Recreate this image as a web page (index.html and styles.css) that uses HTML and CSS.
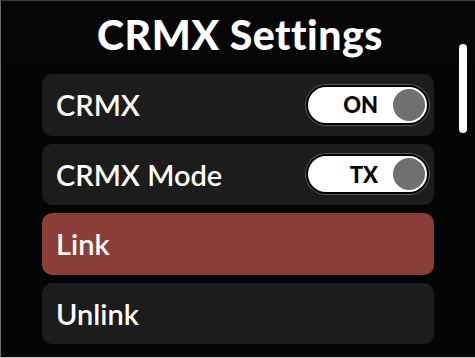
FILE: index.html
```html
<!DOCTYPE html>
<html>

<head>
    <title>CRMX Settings</title>
    <link rel="stylesheet" href="styles.css">
</head>

<body>
    <div class="screen">
        <div class="header">
            <h1 class="title">CRMX Settings</h1>
        </div>

        <div class="list">
            <div class="row">
                <span class="label">CRMX</span>
                <div class="toggle">
                    <span class="toggleText">ON</span>
                    <span class="knob"></span>
                </div>
            </div>
            <div class="row">
                <span class="label">CRMX Mode</span>
                <div class="toggle">
                    <span class="toggleText">TX</span>
                    <span class="knob"></span>
                </div>
            </div>
            <div class="row selected">
                <span class="label">Link</span>
            </div>
            <div class="row">
                <span class="label">Unlink</span>
            </div>
        </div>

        <div class="scrollbar"></div>
    </div>
</body>

</html>
```

FILE: styles.css
```css
body {
    margin: 0;
    background-color: #030605;
}

.screen {
    position: relative;
    width: 475px;
    height: 358px;
    box-sizing: border-box;
    background-color: #030605;
    border-top: 1px solid #3c3c3c;
    border-left: 1px solid #6a6a6a;
    border-bottom: 1px solid #c8c8c8;
    padding-top: 4px;
    font-family: "Lato", "Liberation Sans", sans-serif;
    color: #ffffff;
    overflow: hidden;
}

.header {
    height: 58px;
    margin-left: 4px;
    background-color: #060606;
    display: flex;
    align-items: center;
    justify-content: center;
}

.title {
    margin: 0;
    font-size: 41px;
    font-weight: 900;
    letter-spacing: 0.5px;
}

.list {
    display: flex;
    flex-direction: column;
    gap: 8px;
    width: 392px;
    margin-left: 41px;
    margin-top: 11px;
}

.row {
    height: 61.5px;
    border-radius: 10px;
    background-color: #1c1c1c;
    display: flex;
    align-items: center;
    justify-content: space-between;
    padding-left: 14px;
    padding-right: 5px;
    box-sizing: border-box;
}

.selected {
    background-color: #8b3e37;
}

.label {
    font-size: 29px;
    font-weight: 600;
}

.toggle {
    width: 123px;
    height: 40px;
    box-sizing: border-box;
    border-radius: 20px;
    background-color: #ffffff;
    border: 2px solid #000000;
    box-shadow: 0 0 0 1px #5a5a5a;
    display: flex;
    align-items: center;
    justify-content: flex-end;
    padding-right: 2px;
}

.toggleText {
    color: #000000;
    font-size: 22px;
    font-weight: 900;
    margin-right: 15px;
}

.knob {
    width: 32px;
    height: 32px;
    border-radius: 50%;
    background-color: #707070;
}

.scrollbar {
    position: absolute;
    left: 458px;
    top: 43px;
    width: 8px;
    height: 89px;
    border-radius: 4px;
    background-color: #ffffff;
}
```
